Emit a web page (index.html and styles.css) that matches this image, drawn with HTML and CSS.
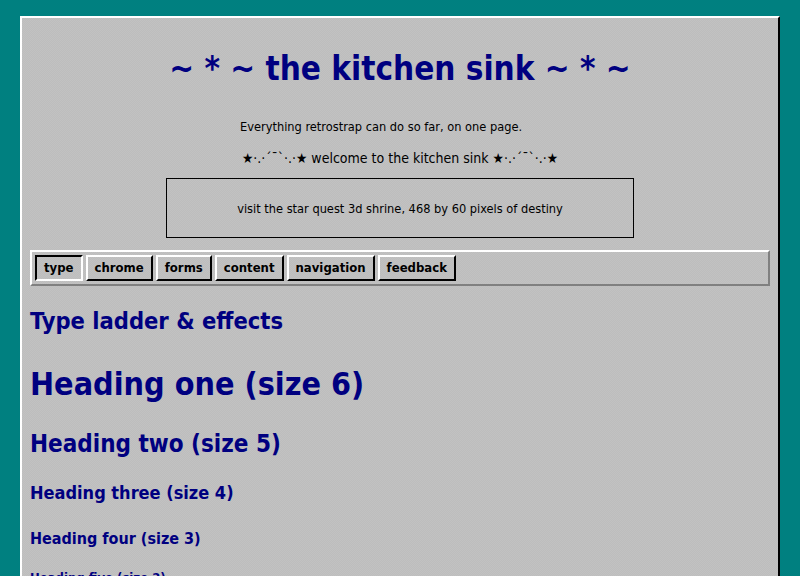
FILE: index.html
```html
<!DOCTYPE html>
<html lang="en">
<head>
  <meta charset="UTF-8">
  <meta name="viewport" content="width=device-width, initial-scale=1.0">
  <title>the kitchen sink</title>
  <link rel="stylesheet" href="styles.css">
</head>
<body>
  <div class="page">
    <header class="masthead">
      <h1 class="site-title">~ * ~ the kitchen sink ~ * ~</h1>
      <p class="lead">Everything retrostrap can do so far, on one page.</p>
      <p class="sparkle">★·.·´¯`·.·★ welcome to the kitchen sink ★·.·´¯`·.·★</p>
      <div class="banner">visit the star quest 3d shrine, 468 by 60 pixels of destiny</div>
    </header>

    <nav class="tabbar">
      <a class="tab active" href="#type">type</a>
      <a class="tab" href="#chrome">chrome</a>
      <a class="tab" href="#forms">forms</a>
      <a class="tab" href="#content">content</a>
      <a class="tab" href="#navigation">navigation</a>
      <a class="tab" href="#feedback">feedback</a>
    </nav>

    <section class="section" id="type">
      <h2 class="section-title">Type ladder &amp; effects</h2>
      <h1 class="h-one">Heading one (size 6)</h1>
      <h2 class="h-two">Heading two (size 5)</h2>
      <h3 class="h-three">Heading three (size 4)</h3>
      <h4 class="h-four">Heading four (size 3)</h4>
      <h5 class="h-five">Heading five (size 2)</h5>
      <h6 class="h-six">Heading six (size 1)</h6>
    </section>
  </div>
</body>
</html>
```

FILE: styles.css
```css
:root {
  --teal: #008080;
  --silver: #c0c0c0;
  --navy: #000080;
  --light: #fff;
  --dark: #000;
  --shadow: #808080;
}

* {
  box-sizing: border-box;
}
body {
  background: var(--teal);
  margin: 16px 0 0;
  font-family: "DejaVu Sans Condensed", "DejaVu Sans", Verdana, sans-serif;
  font-size: 13px;
  color: #000;
}
.page {
  max-width: 760px;
  margin: 0 auto;
  padding: 8px;
  background-color: var(--silver);
  background-image: repeating-conic-gradient(#bdbdbd 0 25%, #c2c2c2 0 50%);
  background-size: 2px 2px;
  border: 2px solid;
  border-color: var(--light) var(--dark) var(--dark) var(--light);
  min-height: 600px;
}

/* header */
.masthead {
  text-align: center;
}
.site-title {
  color: var(--navy);
  font-size: 33px;
  line-height: 40px;
  margin: 23px 0 0;
}
.lead {
  width: 320px;
  margin: 30px auto 0;
  text-align: left;
  font-size: 12.7px;
  line-height: 16px;
}
.sparkle {
  margin: 15px 0 0;
  font-size: 14px;
  line-height: 16px;
}
.banner {
  width: 468px;
  height: 60px;
  margin: 12px auto 0;
  border: 1px solid var(--dark);
  display: flex;
  align-items: center;
  justify-content: center;
  font-size: 12.7px;
}

/* tabs */
.tabbar {
  display: flex;
  gap: 3px;
  margin-top: 12px;
  padding: 3px;
  border: 2px solid;
  border-color: var(--light) var(--shadow) var(--shadow) var(--light);
}
.tab {
  display: block;
  padding: 0 7px;
  line-height: 22px;
  font-weight: bold;
  color: var(--dark);
  text-decoration: none;
  border: 2px solid;
  border-color: var(--light) var(--dark) var(--dark) var(--light);
}
.tab.active {
  border-color: var(--dark) var(--light) var(--light) var(--dark);
}

/* type ladder */
.section h1,
.section h2,
.section h3,
.section h4,
.section h5,
.section h6 {
  color: var(--navy);
  margin: 0;
}
.section-title {
  font-size: 23.5px;
  line-height: 26px;
  margin-top: 22px !important;
}
.h-one {
  font-size: 32px;
  line-height: 40px;
  margin-top: 30px !important;
}
.h-two {
  font-size: 24px;
  line-height: 30px;
  margin-top: 25px !important;
}
.h-three {
  font-size: 18px;
  line-height: 24px;
  margin-top: 22px !important;
}
.h-four {
  font-size: 16px;
  line-height: 20px;
  margin-top: 24px !important;
}
.h-five {
  font-size: 13px;
  line-height: 18px;
  margin-top: 20px !important;
}
.h-six {
  font-size: 11px;
  margin-top: 20px !important;
}
```
